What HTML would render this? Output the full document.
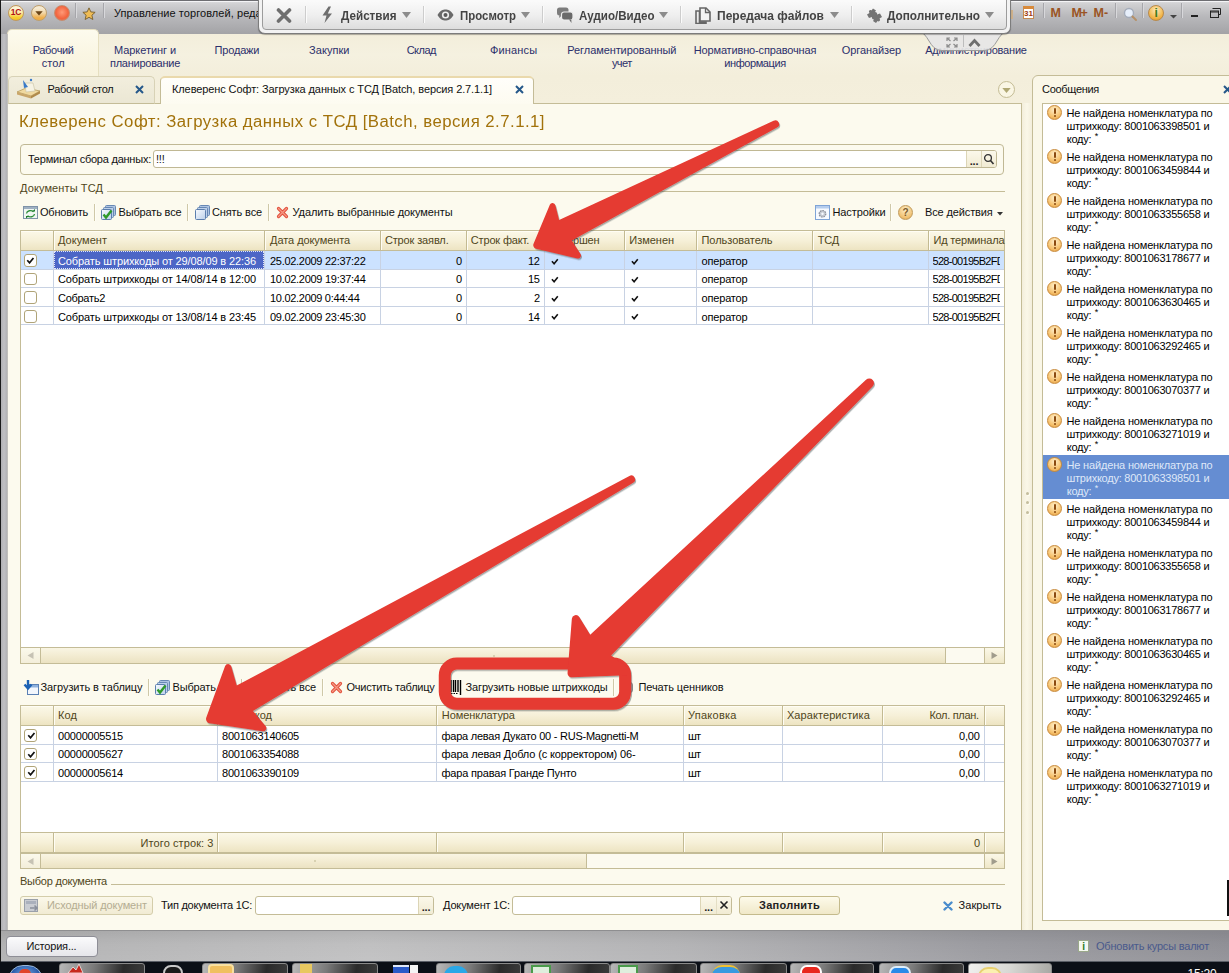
<!DOCTYPE html>
<html lang="ru"><head><meta charset="utf-8"><title>1C</title>
<style>
html,body{margin:0;padding:0;background:#000;}
#root{position:relative;width:1229px;height:973px;overflow:hidden;font-family:"Liberation Sans","DejaVu Sans",sans-serif;font-size:11px;background:#fcfaed;}
#root div,#root span.t,#root svg{position:absolute;box-sizing:border-box;}
span.t{white-space:pre;}
</style></head><body><div id="root">
<div style="left:0px;top:0px;width:1229px;height:34px;background:linear-gradient(#e2e2e3 0px,#d0d0d2 4px,#b9b9bc 16px,#a3a3a6 34px);"></div>
<div style="left:0px;top:0px;width:1229px;height:1px;background:#6e6e72;"></div>
<div style="left:0px;top:1px;width:1229px;height:1px;background:#f4f4f6;"></div>
<div style="left:8px;top:5px;width:16px;height:16px;border-radius:8px;background:linear-gradient(#fdf4d8 15%,#fbe9a0 50%,#f7cf30 80%,#f2c028);border:1px solid #c2995a;"></div>
<span class="t" style="left:10.75px;top:5.80px;font-size:8.5px;line-height:12px;color:#b01216;letter-spacing:-0.188px;font-weight:bold;">1С</span>
<div style="left:31px;top:5px;width:16px;height:16px;border-radius:8px;background:linear-gradient(#f5ead2 15%,#f1d6a6 50%,#f0ae48 85%);border:1px solid #bf9f6c;"></div>
<svg style="left:35px;top:11px" width="8" height="5"><path d="M.3 .3h7.400l-3.700 4.200z" fill="#6a4416"/></svg>
<div style="left:54px;top:5px;width:16px;height:16px;border-radius:8px;background:radial-gradient(circle at 50% 45%,#ff9a78,#f2643e 60%,#e07a5c 85%,#d8967c);border:1px solid #c88a6c;"></div>
<div style="left:75px;top:3px;width:1px;height:15px;background:#a6a6aa;"></div>
<div style="left:76px;top:3px;width:1px;height:15px;background:#d8d8db;"></div>
<svg style="left:82px;top:6.500px" width="14" height="14" viewBox="0 0 16 16"><path d="M8 1l2.100 4.600 4.900.5-3.700 3.300 1.100 4.900L8 11.800 3.600 14.300l1.100-4.900L1 6.100l4.900-.5z" fill="#efbc55" stroke="#7c6230" stroke-width="1.100"/></svg>
<div style="left:103px;top:3px;width:1px;height:15px;background:#a6a6aa;"></div>
<div style="left:104px;top:3px;width:1px;height:15px;background:#d8d8db;"></div>
<span class="t" style="left:114.00px;top:5.50px;font-size:11px;line-height:15px;color:#111;letter-spacing:0.060px;">Управление торговлей, редакция 11</span>
<div style="left:1011px;top:10px;width:2px;height:9px;background:#cdb08a;"></div>
<div style="left:1022.7px;top:5.5px;width:11.5px;height:13px;background:#fff;border:1px solid #c58a52;border-top:3px solid #d98a3a;"></div>
<span class="t" style="left:1024.00px;top:8.30px;font-size:8px;line-height:12px;color:#a03a10;letter-spacing:0.047px;font-weight:bold;">31</span>
<div style="left:1043px;top:3px;width:1px;height:15px;background:#a6a6aa;"></div>
<div style="left:1044px;top:3px;width:1px;height:15px;background:#d8d8db;"></div>
<span class="t" style="left:1050.50px;top:4.80px;font-size:12.5px;line-height:17px;color:#9a5424;letter-spacing:-0.422px;font-weight:bold;">M</span>
<span class="t" style="left:1071.50px;top:4.80px;font-size:12.5px;line-height:17px;color:#9a5424;letter-spacing:-1.359px;font-weight:bold;">M+</span>
<span class="t" style="left:1093.50px;top:4.80px;font-size:12.5px;line-height:17px;color:#9a5424;letter-spacing:0.211px;font-weight:bold;">M-</span>
<div style="left:1115px;top:3px;width:1px;height:15px;background:#a6a6aa;"></div>
<div style="left:1116px;top:3px;width:1px;height:15px;background:#d8d8db;"></div>
<svg style="left:1122.500px;top:6.500px" width="15" height="15" viewBox="0 0 15 15"><circle cx="6" cy="6" r="4.500" fill="#e6eefa" stroke="#a4acba" stroke-width="1.400"/><path d="M9.500 9.500l3.500 3.500" stroke="#b59068" stroke-width="2" stroke-linecap="round"/></svg>
<div style="left:1142px;top:3px;width:1px;height:15px;background:#a6a6aa;"></div>
<div style="left:1143px;top:3px;width:1px;height:15px;background:#d8d8db;"></div>
<div style="left:1148px;top:5px;width:16px;height:16px;border-radius:8px;background:radial-gradient(circle at 50% 30%,#fdeab8,#f0b040 70%,#cc8a2a);border:1px solid #b98a4a;"></div>
<span class="t" style="left:1154.45px;top:5.00px;font-size:12px;line-height:16px;color:#3a7a1a;letter-spacing:-0.240px;font-weight:bold;">i</span>
<svg style="left:1170px;top:15px" width="7" height="4"><path d="M0 0h7l-3.500 3.500z" fill="#444"/></svg>
<div style="left:1181px;top:3px;width:1px;height:15px;background:#a6a6aa;"></div>
<div style="left:1182px;top:3px;width:1px;height:15px;background:#d8d8db;"></div>
<div style="left:1191px;top:14.8px;width:7px;height:2px;background:#222;"></div>
<svg style="left:1210px;top:8px" width="11" height="10" viewBox="0 0 11 10"><path d="M2.500 .5h8v6h-2" fill="none" stroke="#222"/><rect x=".5" y="3" width="8" height="6.500" fill="none" stroke="#222"/><path d="M.5 4h8" stroke="#222"/></svg>
<div style="left:0px;top:34px;width:1229px;height:42px;background:linear-gradient(#f3eedb,#f5f1e0 50%,#f3eedb);"></div>
<div style="left:7px;top:28.5px;width:92px;height:48px;background:linear-gradient(#fdfbee,#faf6e3 50%,#f8f3de);border-radius:5px 5px 0 0;border:1px solid #e6dfc0;border-bottom:none;"></div>
<span class="t" style="left:32.70px;top:43.20px;font-size:11px;line-height:15px;color:#2b2f6b;letter-spacing:-0.328px;">Рабочий</span>
<span class="t" style="left:41.70px;top:56.20px;font-size:11px;line-height:15px;color:#2b2f6b;letter-spacing:0.070px;">стол</span>
<span class="t" style="left:113.90px;top:43.20px;font-size:11px;line-height:15px;color:#2b2f6b;letter-spacing:-0.044px;">Маркетинг и</span>
<span class="t" style="left:110.00px;top:56.20px;font-size:11px;line-height:15px;color:#2b2f6b;letter-spacing:-0.260px;">планирование</span>
<span class="t" style="left:214.55px;top:43.20px;font-size:11px;line-height:15px;color:#2b2f6b;letter-spacing:-0.179px;">Продажи</span>
<span class="t" style="left:309.05px;top:43.20px;font-size:11px;line-height:15px;color:#2b2f6b;letter-spacing:0.054px;">Закупки</span>
<span class="t" style="left:406.65px;top:43.20px;font-size:11px;line-height:15px;color:#2b2f6b;letter-spacing:-0.509px;">Склад</span>
<span class="t" style="left:489.95px;top:43.20px;font-size:11px;line-height:15px;color:#2b2f6b;letter-spacing:0.159px;">Финансы</span>
<span class="t" style="left:567.30px;top:43.20px;font-size:11px;line-height:15px;color:#2b2f6b;letter-spacing:-0.083px;">Регламентированный</span>
<span class="t" style="left:611.90px;top:56.20px;font-size:11px;line-height:15px;color:#2b2f6b;letter-spacing:-0.558px;">учет</span>
<span class="t" style="left:693.75px;top:43.20px;font-size:11px;line-height:15px;color:#2b2f6b;letter-spacing:-0.151px;">Нормативно-справочная</span>
<span class="t" style="left:724.25px;top:56.20px;font-size:11px;line-height:15px;color:#2b2f6b;letter-spacing:-0.409px;">информация</span>
<span class="t" style="left:841.75px;top:43.20px;font-size:11px;line-height:15px;color:#2b2f6b;letter-spacing:-0.076px;">Органайзер</span>
<span class="t" style="left:925.20px;top:43.20px;font-size:11px;line-height:15px;color:#2b2f6b;letter-spacing:-0.194px;">Администрирование</span>
<div style="left:0px;top:76px;width:1229px;height:27px;background:linear-gradient(#f3eedb,#f4efdc);"></div>
<div style="left:8px;top:102.6px;width:1014px;height:1px;background:#c4bc97;"></div>
<div style="left:8px;top:75.5px;width:146.5px;height:28.5px;background:linear-gradient(#f2eedd,#ebe7d4);border:1px solid #d8d2b6;border-radius:5px 5px 0 0;border-bottom:1px solid #c4bc97;"></div>
<svg style="left:16px;top:77px" width="26" height="22" viewBox="0 0 26 22"><path d="M1 15l9-4 14 3-9 5z" fill="#f0d9a0" stroke="#b89a5a" stroke-width=".8"/><path d="M1 15v2.5l14 4V19z" fill="#c9a66a"/><path d="M15 19v2.500l9-5V14z" fill="#b08a4a"/><path d="M9 6l8 0 2 8-9 1z" fill="#f6f3e4" stroke="#c8c0a0" stroke-width=".6"/><path d="M7 3l5 7-4 1z" fill="#3a7ac8"/><circle cx="15" cy="3" r="1.2" fill="#3a7ac8"/></svg>
<span class="t" style="left:47.50px;top:81.50px;font-size:11px;line-height:15px;color:#111;letter-spacing:-0.255px;">Рабочий стол</span>
<svg style="left:135.2px;top:85px" width="9" height="9" viewBox="0 0 9 9"><path d="M1 1l7 7M8 1l-7 7" stroke="#25588a" stroke-width="2"/></svg>
<div style="left:160px;top:75.5px;width:374px;height:29px;background:linear-gradient(#fffefa,#fdfbf0);border:1px solid #c4bc97;border-top:2px solid #ead9ac;border-radius:5px 5px 0 0;border-bottom:none;"></div>
<span class="t" style="left:172.00px;top:82.00px;font-size:11px;line-height:15px;color:#111;letter-spacing:-0.106px;">Клеверенс Софт: Загрузка данных с ТСД [Batch, версия 2.7.1.1]</span>
<svg style="left:514.6px;top:85px" width="9" height="9" viewBox="0 0 9 9"><path d="M1 1l7 7M8 1l-7 7" stroke="#25588a" stroke-width="2"/></svg>
<div style="left:998px;top:80.5px;width:17px;height:17px;border-radius:9px;border:1px solid #c4bc94;background:#faf6e4;"></div>
<svg style="left:1002px;top:87.500px" width="9" height="6"><path d="M.3 0h8.400l-4.200 5z" fill="#b0a874"/></svg>
<div style="left:8px;top:103.6px;width:1014px;height:826.4px;background:#fcfaee;border-right:1px solid #c4bc97;"></div>
<span class="t" style="left:19.00px;top:110.50px;font-size:16px;line-height:21px;color:#a2720b;letter-spacing:0.450px;transform:scaleX(1.0472);transform-origin:left center;">Клеверенс Софт: Загрузка данных с ТСД [Batch, версия 2.7.1.1]</span>
<div style="left:20px;top:144.4px;width:984px;height:30.5px;border:1px solid #c0b894;border-radius:4px;background:#fcfaee;"></div>
<span class="t" style="left:28.00px;top:152.00px;font-size:11px;line-height:15px;color:#111;letter-spacing:-0.231px;">Терминал сбора данных:</span>
<div style="left:153px;top:149.5px;width:844px;height:18.7px;background:#fff;border:1px solid #c0b894;border-radius:3px;"></div>
<span class="t" style="left:156.00px;top:152.00px;font-size:11px;line-height:15px;color:#111;letter-spacing:-0.220px;">!!!</span>
<div style="left:966px;top:150.5px;width:30px;height:16.7px;background:linear-gradient(#fbf8ea,#f1ebd3);border-left:1px solid #dcd5b6;border-radius:0 2px 2px 0;"></div>
<span class="t" style="left:969.74px;top:153.50px;font-size:11px;line-height:15px;color:#222;letter-spacing:-0.220px;font-weight:bold;">...</span>
<div style="left:981px;top:150.5px;width:1px;height:16.7px;background:#dcd5b6;"></div>
<svg style="left:983px;top:153px" width="12" height="13" viewBox="0 0 12 13"><circle cx="5" cy="5" r="3.400" fill="none" stroke="#333" stroke-width="1.300"/><path d="M7.500 7.500l3 3.500" stroke="#333" stroke-width="1.600"/></svg>
<span class="t" style="left:20.00px;top:181.00px;font-size:11px;line-height:15px;color:#4f4620;letter-spacing:0.105px;">Документы ТСД</span>
<div style="left:107px;top:191px;width:898px;height:1px;background:#c4bc97;"></div>
<svg style="left:23px;top:206px" width="15" height="13" viewBox="0 0 15 13"><rect x=".5" y=".5" width="14" height="12" fill="#f0f6f2" stroke="#7f93a8"/><rect x="1" y="1" width="13" height="2" fill="#9fb0c2"/><path d="M3.500 7.500a4 3.200 0 0 1 7-1.800M11.500 8a4 3.200 0 0 1-7 1.800" fill="none" stroke="#2f8f3c" stroke-width="1.300"/><path d="M9 5.500h3v-2.500zM6 10H3v2.500z" fill="#1f7a2c"/></svg>
<span class="t" style="left:40.00px;top:205.00px;font-size:11px;line-height:15px;color:#111;letter-spacing:-0.227px;">Обновить</span>
<div style="left:94px;top:204px;width:1px;height:17px;background:#cfc8a8;"></div>
<div style="left:95px;top:204px;width:1px;height:17px;background:#fffef6;"></div>
<svg style="left:101px;top:205px" width="15" height="15" viewBox="0 0 15 15"><defs><linearGradient id="sg1" x1="0" y1="0" x2="1" y2="1"><stop offset="0" stop-color="#f8fbff"/><stop offset="1" stop-color="#bcd0ea"/></linearGradient></defs><rect x="4.500" y=".5" width="10" height="10" rx="1" fill="#aec4e2" stroke="#6788b4"/><rect x="2.500" y="2.500" width="10" height="10" rx="1" fill="#bdd0ea" stroke="#6788b4"/><rect x=".5" y="4.500" width="10" height="10" rx="1" fill="url(#sg1)" stroke="#5c7fae"/><path d="M2.500 9.500l2.500 3 5.500-7" fill="none" stroke="#2f9a2a" stroke-width="2.400"/></svg>
<span class="t" style="left:118.50px;top:205.00px;font-size:11px;line-height:15px;color:#111;letter-spacing:-0.155px;">Выбрать все</span>
<div style="left:187px;top:204px;width:1px;height:17px;background:#cfc8a8;"></div>
<div style="left:188px;top:204px;width:1px;height:17px;background:#fffef6;"></div>
<svg style="left:195px;top:205px" width="15" height="15" viewBox="0 0 15 15"><defs><linearGradient id="sg2" x1="0" y1="0" x2="1" y2="1"><stop offset="0" stop-color="#f8fbff"/><stop offset="1" stop-color="#bcd0ea"/></linearGradient></defs><rect x="4.500" y=".5" width="10" height="10" rx="1" fill="#aec4e2" stroke="#6788b4"/><rect x="2.500" y="2.500" width="10" height="10" rx="1" fill="#bdd0ea" stroke="#6788b4"/><rect x=".5" y="4.500" width="10" height="10" rx="1" fill="url(#sg2)" stroke="#5c7fae"/></svg>
<span class="t" style="left:212.00px;top:205.00px;font-size:11px;line-height:15px;color:#111;letter-spacing:-0.127px;">Снять все</span>
<div style="left:268px;top:204px;width:1px;height:17px;background:#cfc8a8;"></div>
<div style="left:269px;top:204px;width:1px;height:17px;background:#fffef6;"></div>
<svg style="left:276px;top:206px" width="13" height="13" viewBox="0 0 13 13"><path d="M2.500 2.500l8 8M10.500 2.500l-8 8" stroke="#e2503c" stroke-width="3.200" stroke-linecap="round"/><path d="M2.500 2.500l8 8M10.500 2.500l-8 8" stroke="#f59a86" stroke-width="1.200" stroke-linecap="round"/></svg>
<span class="t" style="left:292.50px;top:205.00px;font-size:11px;line-height:15px;color:#111;letter-spacing:-0.079px;">Удалить выбранные документы</span>
<svg style="left:815px;top:205px" width="15" height="15" viewBox="0 0 15 15"><rect x=".5" y=".5" width="14" height="14" fill="#f7faff" stroke="#7fa4d6"/><rect x="1" y="1" width="13" height="2.500" fill="#b5cdee"/><circle cx="7.500" cy="8.800" r="3.300" fill="#c4c8d0" stroke="#8a8e98" stroke-width="1.200" stroke-dasharray="1.600 .9"/><circle cx="7.500" cy="8.800" r="1.200" fill="#f7faff"/></svg>
<span class="t" style="left:832.50px;top:205.00px;font-size:11px;line-height:15px;color:#111;letter-spacing:-0.104px;">Настройки</span>
<div style="left:890px;top:204px;width:1px;height:17px;background:#cfc8a8;"></div>
<div style="left:891px;top:204px;width:1px;height:17px;background:#fffef6;"></div>
<div style="left:898px;top:205px;width:15px;height:15px;border-radius:8px;background:radial-gradient(circle at 50% 30%,#fdeec8,#f0c070 70%,#d09a4a);border:1px solid #c09a5a;"></div>
<span class="t" style="left:902.55px;top:206.00px;font-size:10px;line-height:14px;color:#7a5a2a;letter-spacing:-0.200px;font-weight:bold;">?</span>
<span class="t" style="left:925.00px;top:205.00px;font-size:11px;line-height:15px;color:#111;letter-spacing:-0.124px;">Все действия</span>
<svg style="left:996.500px;top:211.500px" width="6" height="4"><path d="M0 0h6l-3 3.500z" fill="#333"/></svg>
<div style="left:20px;top:230px;width:984.5px;height:434px;background:#fff;border:1px solid #c4bc97;"></div>
<div style="left:21px;top:231px;width:983px;height:20px;background:linear-gradient(#fbf8e8,#f6f0d8 50%,#ede4c2);border-bottom:1px solid #c4bc97;box-shadow:inset 0 1px 0 #fffdf4;"></div>
<div style="left:53px;top:231px;width:1px;height:19px;background:#c3ba92;"></div>
<div style="left:54px;top:232px;width:1px;height:18px;background:#fffdf4;"></div>
<span class="t" style="left:58.00px;top:233.40px;font-size:11px;line-height:15px;color:#4f4620;letter-spacing:0.025px;">Документ</span>
<div style="left:264px;top:231px;width:1px;height:19px;background:#c3ba92;"></div>
<div style="left:265px;top:232px;width:1px;height:18px;background:#fffdf4;"></div>
<span class="t" style="left:270.10px;top:233.40px;font-size:11px;line-height:15px;color:#4f4620;letter-spacing:-0.076px;">Дата документа</span>
<div style="left:380px;top:231px;width:1px;height:19px;background:#c3ba92;"></div>
<div style="left:381px;top:232px;width:1px;height:18px;background:#fffdf4;"></div>
<span class="t" style="left:384.90px;top:233.40px;font-size:11px;line-height:15px;color:#4f4620;letter-spacing:-0.132px;">Строк заявл.</span>
<div style="left:466px;top:231px;width:1px;height:19px;background:#c3ba92;"></div>
<div style="left:467px;top:232px;width:1px;height:18px;background:#fffdf4;"></div>
<span class="t" style="left:470.80px;top:233.40px;font-size:11px;line-height:15px;color:#4f4620;letter-spacing:-0.162px;">Строк факт.</span>
<div style="left:544px;top:231px;width:1px;height:19px;background:#c3ba92;"></div>
<div style="left:545px;top:232px;width:1px;height:18px;background:#fffdf4;"></div>
<span class="t" style="left:549.00px;top:233.40px;font-size:11px;line-height:15px;color:#4f4620;letter-spacing:-0.154px;">Завершен</span>
<div style="left:624px;top:231px;width:1px;height:19px;background:#c3ba92;"></div>
<div style="left:625px;top:232px;width:1px;height:18px;background:#fffdf4;"></div>
<span class="t" style="left:629.30px;top:233.40px;font-size:11px;line-height:15px;color:#4f4620;letter-spacing:-0.015px;">Изменен</span>
<div style="left:696px;top:231px;width:1px;height:19px;background:#c3ba92;"></div>
<div style="left:697px;top:232px;width:1px;height:18px;background:#fffdf4;"></div>
<span class="t" style="left:701.50px;top:233.40px;font-size:11px;line-height:15px;color:#4f4620;letter-spacing:-0.033px;">Пользователь</span>
<div style="left:812px;top:231px;width:1px;height:19px;background:#c3ba92;"></div>
<div style="left:813px;top:232px;width:1px;height:18px;background:#fffdf4;"></div>
<span class="t" style="left:817.80px;top:233.40px;font-size:11px;line-height:15px;color:#4f4620;letter-spacing:-0.192px;">ТСД</span>
<div style="left:928px;top:231px;width:1px;height:19px;background:#c3ba92;"></div>
<div style="left:929px;top:232px;width:1px;height:18px;background:#fffdf4;"></div>
<span class="t" style="left:933.40px;top:233.40px;font-size:11px;line-height:15px;color:#4f4620;letter-spacing:-0.164px;">Ид терминала</span>
<div style="left:21px;top:251px;width:983px;height:18px;background:#cce2ff;"></div>
<div style="left:54px;top:251px;width:210px;height:18px;background:#4c66c6;border:1px dotted #dfe6fa;"></div>
<div style="left:21px;top:269px;width:983px;height:1px;background:#c8d2e3;"></div>
<div style="left:53px;top:251px;width:1px;height:19px;background:#c8d2e3;"></div>
<div style="left:264px;top:251px;width:1px;height:19px;background:#c8d2e3;"></div>
<div style="left:380px;top:251px;width:1px;height:19px;background:#c8d2e3;"></div>
<div style="left:466px;top:251px;width:1px;height:19px;background:#c8d2e3;"></div>
<div style="left:544px;top:251px;width:1px;height:19px;background:#c8d2e3;"></div>
<div style="left:624px;top:251px;width:1px;height:19px;background:#c8d2e3;"></div>
<div style="left:696px;top:251px;width:1px;height:19px;background:#c8d2e3;"></div>
<div style="left:812px;top:251px;width:1px;height:19px;background:#c8d2e3;"></div>
<div style="left:928px;top:251px;width:1px;height:19px;background:#c8d2e3;"></div>
<div style="left:24px;top:254.2px;width:12.5px;height:12.5px;background:#fff;border:1px solid #b0a478;border-radius:3px;"></div>
<svg style="left:26.2px;top:257.0px" width="9" height="7" viewBox="0 0 8.500 7"><path d="M1 3.200l2.300 2.600L7.200 1" fill="none" stroke="#111" stroke-width="1.700"/></svg>
<span class="t" style="left:58.00px;top:253.70px;font-size:11px;line-height:15px;color:#fff;letter-spacing:-0.116px;">Собрать штрихкоды от 29/08/09 в 22:36</span>
<span class="t" style="left:270.00px;top:253.70px;font-size:11px;line-height:15px;color:#000;letter-spacing:-0.286px;">25.02.2009 22:37:22</span>
<span class="t" style="left:455.88px;top:253.70px;font-size:11px;line-height:15px;color:#000;letter-spacing:-0.220px;">0</span>
<span class="t" style="left:527.97px;top:253.70px;font-size:11px;line-height:15px;color:#000;letter-spacing:-0.220px;">12</span>
<svg style="left:551px;top:257.5px" width="8" height="7" viewBox="0 0 8.500 7"><path d="M1 3.200l2.300 2.600L7.200 1" fill="none" stroke="#111" stroke-width="1.700"/></svg>
<svg style="left:631px;top:257.5px" width="8" height="7" viewBox="0 0 8.500 7"><path d="M1 3.200l2.300 2.600L7.200 1" fill="none" stroke="#111" stroke-width="1.700"/></svg>
<span class="t" style="left:701.50px;top:253.70px;font-size:11px;line-height:15px;color:#000;letter-spacing:-0.168px;">оператор</span>
<span class="t" style="left:932.50px;top:253.70px;font-size:11px;line-height:15px;color:#000;letter-spacing:-0.710px;width:67.300px;overflow:hidden;">528-00195B2FD</span>
<div style="left:21px;top:287px;width:983px;height:1px;background:#c8d2e3;"></div>
<div style="left:53px;top:270px;width:1px;height:18px;background:#c8d2e3;"></div>
<div style="left:264px;top:270px;width:1px;height:18px;background:#c8d2e3;"></div>
<div style="left:380px;top:270px;width:1px;height:18px;background:#c8d2e3;"></div>
<div style="left:466px;top:270px;width:1px;height:18px;background:#c8d2e3;"></div>
<div style="left:544px;top:270px;width:1px;height:18px;background:#c8d2e3;"></div>
<div style="left:624px;top:270px;width:1px;height:18px;background:#c8d2e3;"></div>
<div style="left:696px;top:270px;width:1px;height:18px;background:#c8d2e3;"></div>
<div style="left:812px;top:270px;width:1px;height:18px;background:#c8d2e3;"></div>
<div style="left:928px;top:270px;width:1px;height:18px;background:#c8d2e3;"></div>
<div style="left:24px;top:272.8px;width:12.5px;height:12.5px;background:#fff;border:1px solid #b0a478;border-radius:3px;"></div>
<span class="t" style="left:58.00px;top:272.30px;font-size:11px;line-height:15px;color:#000;letter-spacing:-0.116px;">Собрать штрихкоды от 14/08/14 в 12:00</span>
<span class="t" style="left:270.00px;top:272.30px;font-size:11px;line-height:15px;color:#000;letter-spacing:-0.286px;">10.02.2009 19:37:44</span>
<span class="t" style="left:455.88px;top:272.30px;font-size:11px;line-height:15px;color:#000;letter-spacing:-0.220px;">0</span>
<span class="t" style="left:527.97px;top:272.30px;font-size:11px;line-height:15px;color:#000;letter-spacing:-0.220px;">15</span>
<svg style="left:551px;top:276.1px" width="8" height="7" viewBox="0 0 8.500 7"><path d="M1 3.200l2.300 2.600L7.200 1" fill="none" stroke="#111" stroke-width="1.700"/></svg>
<svg style="left:631px;top:276.1px" width="8" height="7" viewBox="0 0 8.500 7"><path d="M1 3.200l2.300 2.600L7.200 1" fill="none" stroke="#111" stroke-width="1.700"/></svg>
<span class="t" style="left:701.50px;top:272.30px;font-size:11px;line-height:15px;color:#000;letter-spacing:-0.168px;">оператор</span>
<span class="t" style="left:932.50px;top:272.30px;font-size:11px;line-height:15px;color:#000;letter-spacing:-0.710px;width:67.300px;overflow:hidden;">528-00195B2FD</span>
<div style="left:21px;top:306px;width:983px;height:1px;background:#c8d2e3;"></div>
<div style="left:53px;top:288px;width:1px;height:19px;background:#c8d2e3;"></div>
<div style="left:264px;top:288px;width:1px;height:19px;background:#c8d2e3;"></div>
<div style="left:380px;top:288px;width:1px;height:19px;background:#c8d2e3;"></div>
<div style="left:466px;top:288px;width:1px;height:19px;background:#c8d2e3;"></div>
<div style="left:544px;top:288px;width:1px;height:19px;background:#c8d2e3;"></div>
<div style="left:624px;top:288px;width:1px;height:19px;background:#c8d2e3;"></div>
<div style="left:696px;top:288px;width:1px;height:19px;background:#c8d2e3;"></div>
<div style="left:812px;top:288px;width:1px;height:19px;background:#c8d2e3;"></div>
<div style="left:928px;top:288px;width:1px;height:19px;background:#c8d2e3;"></div>
<div style="left:24px;top:291.4px;width:12.5px;height:12.5px;background:#fff;border:1px solid #b0a478;border-radius:3px;"></div>
<span class="t" style="left:58.00px;top:290.90px;font-size:11px;line-height:15px;color:#000;letter-spacing:-0.281px;">Собрать2</span>
<span class="t" style="left:270.00px;top:290.90px;font-size:11px;line-height:15px;color:#000;letter-spacing:-0.295px;">10.02.2009 0:44:44</span>
<span class="t" style="left:455.88px;top:290.90px;font-size:11px;line-height:15px;color:#000;letter-spacing:-0.220px;">0</span>
<span class="t" style="left:533.88px;top:290.90px;font-size:11px;line-height:15px;color:#000;letter-spacing:-0.220px;">2</span>
<svg style="left:551px;top:294.7px" width="8" height="7" viewBox="0 0 8.500 7"><path d="M1 3.200l2.300 2.600L7.200 1" fill="none" stroke="#111" stroke-width="1.700"/></svg>
<svg style="left:631px;top:294.7px" width="8" height="7" viewBox="0 0 8.500 7"><path d="M1 3.200l2.300 2.600L7.200 1" fill="none" stroke="#111" stroke-width="1.700"/></svg>
<span class="t" style="left:701.50px;top:290.90px;font-size:11px;line-height:15px;color:#000;letter-spacing:-0.168px;">оператор</span>
<span class="t" style="left:932.50px;top:290.90px;font-size:11px;line-height:15px;color:#000;letter-spacing:-0.710px;width:67.300px;overflow:hidden;">528-00195B2FD</span>
<div style="left:21px;top:324px;width:983px;height:1px;background:#c8d2e3;"></div>
<div style="left:53px;top:307px;width:1px;height:18px;background:#c8d2e3;"></div>
<div style="left:264px;top:307px;width:1px;height:18px;background:#c8d2e3;"></div>
<div style="left:380px;top:307px;width:1px;height:18px;background:#c8d2e3;"></div>
<div style="left:466px;top:307px;width:1px;height:18px;background:#c8d2e3;"></div>
<div style="left:544px;top:307px;width:1px;height:18px;background:#c8d2e3;"></div>
<div style="left:624px;top:307px;width:1px;height:18px;background:#c8d2e3;"></div>
<div style="left:696px;top:307px;width:1px;height:18px;background:#c8d2e3;"></div>
<div style="left:812px;top:307px;width:1px;height:18px;background:#c8d2e3;"></div>
<div style="left:928px;top:307px;width:1px;height:18px;background:#c8d2e3;"></div>
<div style="left:24px;top:310.0px;width:12.5px;height:12.5px;background:#fff;border:1px solid #b0a478;border-radius:3px;"></div>
<span class="t" style="left:58.00px;top:309.50px;font-size:11px;line-height:15px;color:#000;letter-spacing:-0.116px;">Собрать штрихкоды от 13/08/14 в 23:45</span>
<span class="t" style="left:270.00px;top:309.50px;font-size:11px;line-height:15px;color:#000;letter-spacing:-0.286px;">09.02.2009 23:45:30</span>
<span class="t" style="left:455.88px;top:309.50px;font-size:11px;line-height:15px;color:#000;letter-spacing:-0.220px;">0</span>
<span class="t" style="left:527.97px;top:309.50px;font-size:11px;line-height:15px;color:#000;letter-spacing:-0.220px;">14</span>
<svg style="left:551px;top:313.3px" width="8" height="7" viewBox="0 0 8.500 7"><path d="M1 3.200l2.300 2.600L7.200 1" fill="none" stroke="#111" stroke-width="1.700"/></svg>
<svg style="left:631px;top:313.3px" width="8" height="7" viewBox="0 0 8.500 7"><path d="M1 3.200l2.300 2.600L7.200 1" fill="none" stroke="#111" stroke-width="1.700"/></svg>
<span class="t" style="left:701.50px;top:309.50px;font-size:11px;line-height:15px;color:#000;letter-spacing:-0.168px;">оператор</span>
<span class="t" style="left:932.50px;top:309.50px;font-size:11px;line-height:15px;color:#000;letter-spacing:-0.710px;width:67.300px;overflow:hidden;">528-00195B2FD</span>
<div style="left:21px;top:647px;width:983px;height:16px;background:#fcfaf0;border-top:1px solid #c4bc97;"></div>
<div style="left:21px;top:648px;width:20px;height:15px;background:linear-gradient(#fbf9ec,#f3eeda);border-right:1px solid #c4bc97;"></div>
<svg style="left:27px;top:651px" width="7" height="9"><path d="M6.500 1v7L.5 4.500z" fill="#c6c2b4"/></svg>
<div style="left:984px;top:648px;width:20px;height:15px;background:linear-gradient(#fbf8e8,#efe7c8);border-left:1px solid #c4bc97;"></div>
<svg style="left:991px;top:651px" width="7" height="9"><path d="M.5 1v7l6-3.500z" fill="#a09c8c"/></svg>
<div style="left:41px;top:648px;width:905px;height:15px;background:linear-gradient(#f9f5e3,#f3ecd2 50%,#ebe2c2);border-right:1px solid #c4bc97;"></div>
<div style="left:493px;top:655px;width:2px;height:2px;background:#cfc8a6;border-radius:1px;"></div>
<svg style="left:23px;top:679px" width="16" height="16" viewBox="0 0 16 16"><rect x="4.500" y="5.500" width="11" height="10" fill="#f2f6fc" stroke="#5a80b4"/><rect x="5" y="6" width="10" height="2.500" fill="#8fb2de"/><path d="M5 1v7.500M1.500 5.500L5 9.500 8.500 5.500" fill="none" stroke="#1d62b4" stroke-width="2.400"/></svg>
<span class="t" style="left:40.50px;top:680.00px;font-size:11px;line-height:15px;color:#111;letter-spacing:-0.073px;">Загрузить в таблицу</span>
<div style="left:148px;top:679px;width:1px;height:17px;background:#cfc8a8;"></div>
<div style="left:149px;top:679px;width:1px;height:17px;background:#fffef6;"></div>
<svg style="left:155px;top:680px" width="15" height="15" viewBox="0 0 15 15"><defs><linearGradient id="sg3" x1="0" y1="0" x2="1" y2="1"><stop offset="0" stop-color="#f8fbff"/><stop offset="1" stop-color="#bcd0ea"/></linearGradient></defs><rect x="4.500" y=".5" width="10" height="10" rx="1" fill="#aec4e2" stroke="#6788b4"/><rect x="2.500" y="2.500" width="10" height="10" rx="1" fill="#bdd0ea" stroke="#6788b4"/><rect x=".5" y="4.500" width="10" height="10" rx="1" fill="url(#sg3)" stroke="#5c7fae"/><path d="M2.500 9.500l2.500 3 5.500-7" fill="none" stroke="#2f9a2a" stroke-width="2.400"/></svg>
<span class="t" style="left:172.50px;top:680.00px;font-size:11px;line-height:15px;color:#111;letter-spacing:-0.155px;">Выбрать все</span>
<div style="left:241px;top:679px;width:1px;height:17px;background:#cfc8a8;"></div>
<div style="left:242px;top:679px;width:1px;height:17px;background:#fffef6;"></div>
<svg style="left:249px;top:680px" width="15" height="15" viewBox="0 0 15 15"><defs><linearGradient id="sg4" x1="0" y1="0" x2="1" y2="1"><stop offset="0" stop-color="#f8fbff"/><stop offset="1" stop-color="#bcd0ea"/></linearGradient></defs><rect x="4.500" y=".5" width="10" height="10" rx="1" fill="#aec4e2" stroke="#6788b4"/><rect x="2.500" y="2.500" width="10" height="10" rx="1" fill="#bdd0ea" stroke="#6788b4"/><rect x=".5" y="4.500" width="10" height="10" rx="1" fill="url(#sg4)" stroke="#5c7fae"/></svg>
<span class="t" style="left:266.00px;top:680.00px;font-size:11px;line-height:15px;color:#111;letter-spacing:-0.127px;">Снять все</span>
<div style="left:322px;top:679px;width:1px;height:17px;background:#cfc8a8;"></div>
<div style="left:323px;top:679px;width:1px;height:17px;background:#fffef6;"></div>
<svg style="left:330px;top:681px" width="13" height="13" viewBox="0 0 13 13"><path d="M2.500 2.500l8 8M10.500 2.500l-8 8" stroke="#e2503c" stroke-width="3.200" stroke-linecap="round"/><path d="M2.500 2.500l8 8M10.500 2.500l-8 8" stroke="#f59a86" stroke-width="1.200" stroke-linecap="round"/></svg>
<span class="t" style="left:346.50px;top:680.00px;font-size:11px;line-height:15px;color:#111;letter-spacing:-0.260px;">Очистить таблицу</span>
<div style="left:440px;top:679px;width:1px;height:17px;background:#cfc8a8;"></div>
<div style="left:441px;top:679px;width:1px;height:17px;background:#fffef6;"></div>
<svg style="left:450px;top:680px" width="12" height="15" viewBox="0 0 12 15"><path d="M1 0v12M3.500 0v12M5.500 0v12M8 0v12M10.500 0v15" stroke="#000" stroke-width="1.400"/><path d="M1 13.500h7" stroke="#000" stroke-width="1" stroke-dasharray="1.500 1"/></svg>
<span class="t" style="left:465.50px;top:680.00px;font-size:11px;line-height:15px;color:#111;letter-spacing:-0.127px;">Загрузить новые штрихкоды</span>
<div style="left:613px;top:679px;width:1px;height:17px;background:#cfc8a8;"></div>
<div style="left:614px;top:679px;width:1px;height:17px;background:#fffef6;"></div>
<div style="left:622px;top:682px;width:11px;height:11px;background:#b8b8b8;border-radius:3px;border:1px solid #8a8a8a;"></div>
<span class="t" style="left:638.50px;top:680.00px;font-size:11px;line-height:15px;color:#111;letter-spacing:-0.105px;">Печать ценников</span>
<div style="left:20px;top:705px;width:984.5px;height:164px;background:#fff;border:1px solid #c4bc97;"></div>
<div style="left:21px;top:706px;width:983px;height:20px;background:linear-gradient(#fbf8e8,#f6f0d8 50%,#ede4c2);border-bottom:1px solid #c4bc97;box-shadow:inset 0 1px 0 #fffdf4;"></div>
<div style="left:53px;top:706px;width:1px;height:19px;background:#c3ba92;"></div>
<div style="left:54px;top:707px;width:1px;height:18px;background:#fffdf4;"></div>
<div style="left:217px;top:706px;width:1px;height:19px;background:#c3ba92;"></div>
<div style="left:218px;top:707px;width:1px;height:18px;background:#fffdf4;"></div>
<div style="left:436px;top:706px;width:1px;height:19px;background:#c3ba92;"></div>
<div style="left:437px;top:707px;width:1px;height:18px;background:#fffdf4;"></div>
<div style="left:683px;top:706px;width:1px;height:19px;background:#c3ba92;"></div>
<div style="left:684px;top:707px;width:1px;height:18px;background:#fffdf4;"></div>
<div style="left:782px;top:706px;width:1px;height:19px;background:#c3ba92;"></div>
<div style="left:783px;top:707px;width:1px;height:18px;background:#fffdf4;"></div>
<div style="left:882px;top:706px;width:1px;height:19px;background:#c3ba92;"></div>
<div style="left:883px;top:707px;width:1px;height:18px;background:#fffdf4;"></div>
<div style="left:984px;top:706px;width:1px;height:19px;background:#c3ba92;"></div>
<div style="left:985px;top:707px;width:1px;height:18px;background:#fffdf4;"></div>
<span class="t" style="left:58.00px;top:708.40px;font-size:11px;line-height:15px;color:#4f4620;letter-spacing:0.099px;">Код</span>
<span class="t" style="left:222.00px;top:708.40px;font-size:11px;line-height:15px;color:#4f4620;letter-spacing:-0.016px;">Штрихкод</span>
<span class="t" style="left:441.80px;top:708.40px;font-size:11px;line-height:15px;color:#4f4620;letter-spacing:-0.069px;">Номенклатура</span>
<span class="t" style="left:688.10px;top:708.40px;font-size:11px;line-height:15px;color:#4f4620;letter-spacing:0.232px;">Упаковка</span>
<span class="t" style="left:786.90px;top:708.40px;font-size:11px;line-height:15px;color:#4f4620;letter-spacing:0.087px;">Характеристика</span>
<span class="t" style="left:929.47px;top:708.40px;font-size:11px;line-height:15px;color:#4f4620;letter-spacing:-0.325px;">Кол. план.</span>
<div style="left:21px;top:744px;width:983px;height:1px;background:#c8d2e3;"></div>
<div style="left:53px;top:726px;width:1px;height:19px;background:#c8d2e3;"></div>
<div style="left:217px;top:726px;width:1px;height:19px;background:#c8d2e3;"></div>
<div style="left:436px;top:726px;width:1px;height:19px;background:#c8d2e3;"></div>
<div style="left:683px;top:726px;width:1px;height:19px;background:#c8d2e3;"></div>
<div style="left:782px;top:726px;width:1px;height:19px;background:#c8d2e3;"></div>
<div style="left:882px;top:726px;width:1px;height:19px;background:#c8d2e3;"></div>
<div style="left:984px;top:726px;width:1px;height:19px;background:#c8d2e3;"></div>
<div style="left:24.3px;top:729.2px;width:12.5px;height:12.5px;background:#fff;border:1px solid #b0a478;border-radius:3px;"></div>
<svg style="left:26.5px;top:732.0px" width="9" height="7" viewBox="0 0 8.500 7"><path d="M1 3.200l2.300 2.600L7.200 1" fill="none" stroke="#111" stroke-width="1.700"/></svg>
<span class="t" style="left:58.00px;top:728.70px;font-size:11px;line-height:15px;color:#000;letter-spacing:-0.209px;">00000005515</span>
<span class="t" style="left:222.00px;top:728.70px;font-size:11px;line-height:15px;color:#000;letter-spacing:-0.195px;">8001063140605</span>
<span class="t" style="left:441.50px;top:728.70px;font-size:11px;line-height:15px;color:#000;letter-spacing:-0.243px;">фара левая Дукато 00 - RUS-Magnetti-M</span>
<span class="t" style="left:688.00px;top:728.70px;font-size:11px;line-height:15px;color:#000;letter-spacing:-0.938px;">шт</span>
<span class="t" style="left:958.89px;top:728.70px;font-size:11px;line-height:15px;color:#000;letter-spacing:-0.105px;">0,00</span>
<div style="left:21px;top:762px;width:983px;height:1px;background:#c8d2e3;"></div>
<div style="left:53px;top:745px;width:1px;height:18px;background:#c8d2e3;"></div>
<div style="left:217px;top:745px;width:1px;height:18px;background:#c8d2e3;"></div>
<div style="left:436px;top:745px;width:1px;height:18px;background:#c8d2e3;"></div>
<div style="left:683px;top:745px;width:1px;height:18px;background:#c8d2e3;"></div>
<div style="left:782px;top:745px;width:1px;height:18px;background:#c8d2e3;"></div>
<div style="left:882px;top:745px;width:1px;height:18px;background:#c8d2e3;"></div>
<div style="left:984px;top:745px;width:1px;height:18px;background:#c8d2e3;"></div>
<div style="left:24.3px;top:747.8000000000001px;width:12.5px;height:12.5px;background:#fff;border:1px solid #b0a478;border-radius:3px;"></div>
<svg style="left:26.5px;top:750.6px" width="9" height="7" viewBox="0 0 8.500 7"><path d="M1 3.200l2.300 2.600L7.200 1" fill="none" stroke="#111" stroke-width="1.700"/></svg>
<span class="t" style="left:58.00px;top:747.30px;font-size:11px;line-height:15px;color:#000;letter-spacing:-0.209px;">00000005627</span>
<span class="t" style="left:222.00px;top:747.30px;font-size:11px;line-height:15px;color:#000;letter-spacing:-0.195px;">8001063354088</span>
<span class="t" style="left:441.50px;top:747.30px;font-size:11px;line-height:15px;color:#000;letter-spacing:-0.141px;">фара левая Добло (с корректором) 06-</span>
<span class="t" style="left:688.00px;top:747.30px;font-size:11px;line-height:15px;color:#000;letter-spacing:-0.938px;">шт</span>
<span class="t" style="left:958.89px;top:747.30px;font-size:11px;line-height:15px;color:#000;letter-spacing:-0.105px;">0,00</span>
<div style="left:21px;top:781px;width:983px;height:1px;background:#c8d2e3;"></div>
<div style="left:53px;top:763px;width:1px;height:19px;background:#c8d2e3;"></div>
<div style="left:217px;top:763px;width:1px;height:19px;background:#c8d2e3;"></div>
<div style="left:436px;top:763px;width:1px;height:19px;background:#c8d2e3;"></div>
<div style="left:683px;top:763px;width:1px;height:19px;background:#c8d2e3;"></div>
<div style="left:782px;top:763px;width:1px;height:19px;background:#c8d2e3;"></div>
<div style="left:882px;top:763px;width:1px;height:19px;background:#c8d2e3;"></div>
<div style="left:984px;top:763px;width:1px;height:19px;background:#c8d2e3;"></div>
<div style="left:24.3px;top:766.4000000000001px;width:12.5px;height:12.5px;background:#fff;border:1px solid #b0a478;border-radius:3px;"></div>
<svg style="left:26.5px;top:769.2px" width="9" height="7" viewBox="0 0 8.500 7"><path d="M1 3.200l2.300 2.600L7.200 1" fill="none" stroke="#111" stroke-width="1.700"/></svg>
<span class="t" style="left:58.00px;top:765.90px;font-size:11px;line-height:15px;color:#000;letter-spacing:-0.209px;">00000005614</span>
<span class="t" style="left:222.00px;top:765.90px;font-size:11px;line-height:15px;color:#000;letter-spacing:-0.195px;">8001063390109</span>
<span class="t" style="left:441.50px;top:765.90px;font-size:11px;line-height:15px;color:#000;letter-spacing:-0.178px;">фара правая Гранде Пунто</span>
<span class="t" style="left:688.00px;top:765.90px;font-size:11px;line-height:15px;color:#000;letter-spacing:-0.938px;">шт</span>
<span class="t" style="left:958.89px;top:765.90px;font-size:11px;line-height:15px;color:#000;letter-spacing:-0.105px;">0,00</span>
<div style="left:21px;top:832px;width:983px;height:21px;background:linear-gradient(#fbf8e8,#f6f0d8 50%,#ede4c2);border-top:1px solid #c4bc97;border-bottom:1px solid #c4bc97;"></div>
<div style="left:53px;top:833px;width:1px;height:19px;background:#c3ba92;"></div>
<div style="left:54px;top:833px;width:1px;height:19px;background:#fffdf4;"></div>
<div style="left:217px;top:833px;width:1px;height:19px;background:#c3ba92;"></div>
<div style="left:218px;top:833px;width:1px;height:19px;background:#fffdf4;"></div>
<div style="left:436px;top:833px;width:1px;height:19px;background:#c3ba92;"></div>
<div style="left:437px;top:833px;width:1px;height:19px;background:#fffdf4;"></div>
<div style="left:683px;top:833px;width:1px;height:19px;background:#c3ba92;"></div>
<div style="left:684px;top:833px;width:1px;height:19px;background:#fffdf4;"></div>
<div style="left:782px;top:833px;width:1px;height:19px;background:#c3ba92;"></div>
<div style="left:783px;top:833px;width:1px;height:19px;background:#fffdf4;"></div>
<div style="left:882px;top:833px;width:1px;height:19px;background:#c3ba92;"></div>
<div style="left:883px;top:833px;width:1px;height:19px;background:#fffdf4;"></div>
<div style="left:984px;top:833px;width:1px;height:19px;background:#c3ba92;"></div>
<div style="left:985px;top:833px;width:1px;height:19px;background:#fffdf4;"></div>
<span class="t" style="left:140.59px;top:835.50px;font-size:11px;line-height:15px;color:#4f4620;letter-spacing:0.093px;">Итого строк: 3</span>
<span class="t" style="left:973.88px;top:835.50px;font-size:11px;line-height:15px;color:#4f4620;letter-spacing:-0.220px;">0</span>
<div style="left:21px;top:853px;width:983px;height:15px;background:#fcfaf0;border-top:1px solid #c4bc97;"></div>
<div style="left:21px;top:854px;width:20px;height:14px;background:linear-gradient(#fbf9ec,#f3eeda);border-right:1px solid #c4bc97;"></div>
<svg style="left:27px;top:857px" width="7" height="9"><path d="M6.500 1v7L.5 4.500z" fill="#c6c2b4"/></svg>
<div style="left:984px;top:854px;width:20px;height:14px;background:linear-gradient(#fbf8e8,#efe7c8);border-left:1px solid #c4bc97;"></div>
<svg style="left:991px;top:857px" width="7" height="9"><path d="M.5 1v7l6-3.500z" fill="#a09c8c"/></svg>
<div style="left:41px;top:854px;width:546px;height:14px;background:linear-gradient(#f9f5e3,#f3ecd2 50%,#ebe2c2);border-right:1px solid #c4bc97;"></div>
<div style="left:314px;top:860px;width:2px;height:2px;background:#cfc8a6;border-radius:1px;"></div>
<span class="t" style="left:20.00px;top:874.00px;font-size:11px;line-height:15px;color:#4f4620;letter-spacing:-0.232px;">Выбор документа</span>
<div style="left:111px;top:884px;width:894px;height:1px;background:#c4bc97;"></div>
<div style="left:20px;top:896px;width:133px;height:19px;background:linear-gradient(#fbf8ea,#f1ebd3);border:1px solid #d4cdaa;border-radius:3px;"></div>
<svg style="left:24px;top:899px" width="15" height="14" viewBox="0 0 15 14"><rect x=".5" y=".5" width="13" height="12" fill="#c9ccd2" stroke="#9aa0aa"/><rect x="2" y="2" width="10" height="3" fill="#aab0bc"/><path d="M6 9h7M10.500 6.500L13 9l-2.500 2.500" fill="none" stroke="#8a909c" stroke-width="1.500"/></svg>
<span class="t" style="left:47.00px;top:898.00px;font-size:11px;line-height:15px;color:#b4ad92;letter-spacing:-0.112px;">Исходный документ</span>
<span class="t" style="left:161.00px;top:898.00px;font-size:11px;line-height:15px;color:#111;letter-spacing:-0.247px;">Тип документа 1С:</span>
<div style="left:255px;top:896px;width:179px;height:19px;background:#fff;border:1px solid #c4bc97;border-radius:3px;"></div>
<div style="left:418px;top:897px;width:15px;height:17px;background:linear-gradient(#fbf8ea,#f1ebd3);border-left:1px solid #dcd5b6;border-radius:0 2px 2px 0;"></div>
<span class="t" style="left:421.74px;top:899.50px;font-size:11px;line-height:15px;color:#222;letter-spacing:-0.220px;font-weight:bold;">...</span>
<span class="t" style="left:443.00px;top:898.00px;font-size:11px;line-height:15px;color:#111;letter-spacing:-0.165px;">Документ 1С:</span>
<div style="left:512px;top:896px;width:220px;height:19px;background:#fff;border:1px solid #c4bc97;border-radius:3px;"></div>
<div style="left:700px;top:897px;width:31px;height:17px;background:linear-gradient(#fbf8ea,#f1ebd3);border-left:1px solid #dcd5b6;border-radius:0 2px 2px 0;"></div>
<span class="t" style="left:704.24px;top:899.50px;font-size:11px;line-height:15px;color:#222;letter-spacing:-0.220px;font-weight:bold;">...</span>
<div style="left:716px;top:897px;width:1px;height:17px;background:#e4dec4;"></div>
<svg style="left:719px;top:900px" width="10" height="10" viewBox="0 0 10 10"><path d="M1.500 1.500l7 7M8.500 1.500l-7 7" stroke="#222" stroke-width="1.600"/></svg>
<div style="left:738.7px;top:896px;width:101px;height:19px;background:linear-gradient(#fdfaea,#f0e8c8);border:1px solid #c4ba8c;border-radius:3px;"></div>
<span class="t" style="left:759.00px;top:898.00px;font-size:11px;line-height:15px;color:#222;letter-spacing:0.260px;font-weight:bold;">Заполнить</span>
<svg style="left:942.500px;top:900.500px" width="10" height="10" viewBox="0 0 10 10"><path d="M1.500 1.500l7 7M8.500 1.500l-7 7" stroke="#4a8ccc" stroke-width="2.400" stroke-linecap="round"/></svg>
<span class="t" style="left:958.50px;top:898.00px;font-size:11px;line-height:15px;color:#111;letter-spacing:0.089px;">Закрыть</span>
<div style="left:1022px;top:103px;width:10px;height:827px;background:linear-gradient(90deg,#f3eedb,#faf7e8 50%,#f3eedb);"></div>
<div style="left:1025.5px;top:491.5px;width:3px;height:3px;background:#c4bd9c;border-radius:1.500px;box-shadow:1px 1px 0 #fffdf2;"></div>
<div style="left:1025.5px;top:501px;width:3px;height:3px;background:#c4bd9c;border-radius:1.500px;box-shadow:1px 1px 0 #fffdf2;"></div>
<div style="left:1025.5px;top:510.5px;width:3px;height:3px;background:#c4bd9c;border-radius:1.500px;box-shadow:1px 1px 0 #fffdf2;"></div>
<div style="left:1032px;top:75px;width:200px;height:856px;background:#faf7e8;border:1px solid #c4bc97;border-radius:6px 0 0 0;"></div>
<span class="t" style="left:1042.00px;top:81.50px;font-size:11px;line-height:15px;color:#111;letter-spacing:-0.300px;">Сообщения</span>
<svg style="left:1223px;top:85px" width="9" height="9" viewBox="0 0 9 9"><path d="M1 1l7 7M8 1l-7 7" stroke="#25588a" stroke-width="2"/></svg>
<div style="left:1042px;top:102.6px;width:190px;height:818.4px;background:#fff;border:1px solid #c4bc97;"></div>
<div style="left:1047px;top:105px;width:15px;height:15px;border-radius:8px;background:radial-gradient(circle at 50% 30%,#fff0cc,#f6c06a 65%,#dc9440);border:1px solid #c88a3a;"></div>
<div style="left:1053.5px;top:107.5px;width:2px;height:6px;background:#8a4a10;border-radius:1px;"></div>
<div style="left:1053.5px;top:115px;width:2px;height:2px;background:#8a4a10;border-radius:1px;"></div>
<span class="t" style="left:1066.50px;top:106.00px;font-size:11px;line-height:15px;color:#000;letter-spacing:-0.166px;">Не найдена номенклатура по</span>
<span class="t" style="left:1066.50px;top:119.00px;font-size:11px;line-height:15px;color:#000;letter-spacing:-0.246px;">штрихкоду: 8001063398501 и</span>
<span class="t" style="left:1066.80px;top:131.50px;font-size:11px;line-height:15px;color:#000;letter-spacing:-0.259px;">коду:</span>
<span class="t" style="left:1094.80px;top:130.30px;font-size:9px;line-height:13px;color:#000;">*</span>
<div style="left:1047px;top:149px;width:15px;height:15px;border-radius:8px;background:radial-gradient(circle at 50% 30%,#fff0cc,#f6c06a 65%,#dc9440);border:1px solid #c88a3a;"></div>
<div style="left:1053.5px;top:151.5px;width:2px;height:6px;background:#8a4a10;border-radius:1px;"></div>
<div style="left:1053.5px;top:159px;width:2px;height:2px;background:#8a4a10;border-radius:1px;"></div>
<span class="t" style="left:1066.50px;top:150.00px;font-size:11px;line-height:15px;color:#000;letter-spacing:-0.166px;">Не найдена номенклатура по</span>
<span class="t" style="left:1066.50px;top:163.00px;font-size:11px;line-height:15px;color:#000;letter-spacing:-0.246px;">штрихкоду: 8001063459844 и</span>
<span class="t" style="left:1066.80px;top:175.50px;font-size:11px;line-height:15px;color:#000;letter-spacing:-0.259px;">коду:</span>
<span class="t" style="left:1094.80px;top:174.30px;font-size:9px;line-height:13px;color:#000;">*</span>
<div style="left:1047px;top:193px;width:15px;height:15px;border-radius:8px;background:radial-gradient(circle at 50% 30%,#fff0cc,#f6c06a 65%,#dc9440);border:1px solid #c88a3a;"></div>
<div style="left:1053.5px;top:195.5px;width:2px;height:6px;background:#8a4a10;border-radius:1px;"></div>
<div style="left:1053.5px;top:203px;width:2px;height:2px;background:#8a4a10;border-radius:1px;"></div>
<span class="t" style="left:1066.50px;top:194.00px;font-size:11px;line-height:15px;color:#000;letter-spacing:-0.166px;">Не найдена номенклатура по</span>
<span class="t" style="left:1066.50px;top:207.00px;font-size:11px;line-height:15px;color:#000;letter-spacing:-0.246px;">штрихкоду: 8001063355658 и</span>
<span class="t" style="left:1066.80px;top:219.50px;font-size:11px;line-height:15px;color:#000;letter-spacing:-0.259px;">коду:</span>
<span class="t" style="left:1094.80px;top:218.30px;font-size:9px;line-height:13px;color:#000;">*</span>
<div style="left:1047px;top:237px;width:15px;height:15px;border-radius:8px;background:radial-gradient(circle at 50% 30%,#fff0cc,#f6c06a 65%,#dc9440);border:1px solid #c88a3a;"></div>
<div style="left:1053.5px;top:239.5px;width:2px;height:6px;background:#8a4a10;border-radius:1px;"></div>
<div style="left:1053.5px;top:247px;width:2px;height:2px;background:#8a4a10;border-radius:1px;"></div>
<span class="t" style="left:1066.50px;top:238.00px;font-size:11px;line-height:15px;color:#000;letter-spacing:-0.166px;">Не найдена номенклатура по</span>
<span class="t" style="left:1066.50px;top:251.00px;font-size:11px;line-height:15px;color:#000;letter-spacing:-0.246px;">штрихкоду: 8001063178677 и</span>
<span class="t" style="left:1066.80px;top:263.50px;font-size:11px;line-height:15px;color:#000;letter-spacing:-0.259px;">коду:</span>
<span class="t" style="left:1094.80px;top:262.30px;font-size:9px;line-height:13px;color:#000;">*</span>
<div style="left:1047px;top:281px;width:15px;height:15px;border-radius:8px;background:radial-gradient(circle at 50% 30%,#fff0cc,#f6c06a 65%,#dc9440);border:1px solid #c88a3a;"></div>
<div style="left:1053.5px;top:283.5px;width:2px;height:6px;background:#8a4a10;border-radius:1px;"></div>
<div style="left:1053.5px;top:291px;width:2px;height:2px;background:#8a4a10;border-radius:1px;"></div>
<span class="t" style="left:1066.50px;top:282.00px;font-size:11px;line-height:15px;color:#000;letter-spacing:-0.166px;">Не найдена номенклатура по</span>
<span class="t" style="left:1066.50px;top:295.00px;font-size:11px;line-height:15px;color:#000;letter-spacing:-0.246px;">штрихкоду: 8001063630465 и</span>
<span class="t" style="left:1066.80px;top:307.50px;font-size:11px;line-height:15px;color:#000;letter-spacing:-0.259px;">коду:</span>
<span class="t" style="left:1094.80px;top:306.30px;font-size:9px;line-height:13px;color:#000;">*</span>
<div style="left:1047px;top:325px;width:15px;height:15px;border-radius:8px;background:radial-gradient(circle at 50% 30%,#fff0cc,#f6c06a 65%,#dc9440);border:1px solid #c88a3a;"></div>
<div style="left:1053.5px;top:327.5px;width:2px;height:6px;background:#8a4a10;border-radius:1px;"></div>
<div style="left:1053.5px;top:335px;width:2px;height:2px;background:#8a4a10;border-radius:1px;"></div>
<span class="t" style="left:1066.50px;top:326.00px;font-size:11px;line-height:15px;color:#000;letter-spacing:-0.166px;">Не найдена номенклатура по</span>
<span class="t" style="left:1066.50px;top:339.00px;font-size:11px;line-height:15px;color:#000;letter-spacing:-0.246px;">штрихкоду: 8001063292465 и</span>
<span class="t" style="left:1066.80px;top:351.50px;font-size:11px;line-height:15px;color:#000;letter-spacing:-0.259px;">коду:</span>
<span class="t" style="left:1094.80px;top:350.30px;font-size:9px;line-height:13px;color:#000;">*</span>
<div style="left:1047px;top:369px;width:15px;height:15px;border-radius:8px;background:radial-gradient(circle at 50% 30%,#fff0cc,#f6c06a 65%,#dc9440);border:1px solid #c88a3a;"></div>
<div style="left:1053.5px;top:371.5px;width:2px;height:6px;background:#8a4a10;border-radius:1px;"></div>
<div style="left:1053.5px;top:379px;width:2px;height:2px;background:#8a4a10;border-radius:1px;"></div>
<span class="t" style="left:1066.50px;top:370.00px;font-size:11px;line-height:15px;color:#000;letter-spacing:-0.166px;">Не найдена номенклатура по</span>
<span class="t" style="left:1066.50px;top:383.00px;font-size:11px;line-height:15px;color:#000;letter-spacing:-0.246px;">штрихкоду: 8001063070377 и</span>
<span class="t" style="left:1066.80px;top:395.50px;font-size:11px;line-height:15px;color:#000;letter-spacing:-0.259px;">коду:</span>
<span class="t" style="left:1094.80px;top:394.30px;font-size:9px;line-height:13px;color:#000;">*</span>
<div style="left:1047px;top:413px;width:15px;height:15px;border-radius:8px;background:radial-gradient(circle at 50% 30%,#fff0cc,#f6c06a 65%,#dc9440);border:1px solid #c88a3a;"></div>
<div style="left:1053.5px;top:415.5px;width:2px;height:6px;background:#8a4a10;border-radius:1px;"></div>
<div style="left:1053.5px;top:423px;width:2px;height:2px;background:#8a4a10;border-radius:1px;"></div>
<span class="t" style="left:1066.50px;top:414.00px;font-size:11px;line-height:15px;color:#000;letter-spacing:-0.166px;">Не найдена номенклатура по</span>
<span class="t" style="left:1066.50px;top:427.00px;font-size:11px;line-height:15px;color:#000;letter-spacing:-0.246px;">штрихкоду: 8001063271019 и</span>
<span class="t" style="left:1066.80px;top:439.50px;font-size:11px;line-height:15px;color:#000;letter-spacing:-0.259px;">коду:</span>
<span class="t" style="left:1094.80px;top:438.30px;font-size:9px;line-height:13px;color:#000;">*</span>
<div style="left:1043px;top:455px;width:190px;height:44px;background:#658dd2;"></div>
<div style="left:1047px;top:457px;width:15px;height:15px;border-radius:8px;background:radial-gradient(circle at 50% 30%,#fff0cc,#f6c06a 65%,#dc9440);border:1px solid #c88a3a;"></div>
<div style="left:1053.5px;top:459.5px;width:2px;height:6px;background:#8a4a10;border-radius:1px;"></div>
<div style="left:1053.5px;top:467px;width:2px;height:2px;background:#8a4a10;border-radius:1px;"></div>
<span class="t" style="left:1066.50px;top:458.00px;font-size:11px;line-height:15px;color:#dfe8f8;letter-spacing:-0.166px;">Не найдена номенклатура по</span>
<span class="t" style="left:1066.50px;top:471.00px;font-size:11px;line-height:15px;color:#dfe8f8;letter-spacing:-0.246px;">штрихкоду: 8001063398501 и</span>
<span class="t" style="left:1066.80px;top:483.50px;font-size:11px;line-height:15px;color:#dfe8f8;letter-spacing:-0.259px;">коду:</span>
<span class="t" style="left:1094.80px;top:482.30px;font-size:9px;line-height:13px;color:#dfe8f8;">*</span>
<div style="left:1047px;top:501px;width:15px;height:15px;border-radius:8px;background:radial-gradient(circle at 50% 30%,#fff0cc,#f6c06a 65%,#dc9440);border:1px solid #c88a3a;"></div>
<div style="left:1053.5px;top:503.5px;width:2px;height:6px;background:#8a4a10;border-radius:1px;"></div>
<div style="left:1053.5px;top:511px;width:2px;height:2px;background:#8a4a10;border-radius:1px;"></div>
<span class="t" style="left:1066.50px;top:502.00px;font-size:11px;line-height:15px;color:#000;letter-spacing:-0.166px;">Не найдена номенклатура по</span>
<span class="t" style="left:1066.50px;top:515.00px;font-size:11px;line-height:15px;color:#000;letter-spacing:-0.246px;">штрихкоду: 8001063459844 и</span>
<span class="t" style="left:1066.80px;top:527.50px;font-size:11px;line-height:15px;color:#000;letter-spacing:-0.259px;">коду:</span>
<span class="t" style="left:1094.80px;top:526.30px;font-size:9px;line-height:13px;color:#000;">*</span>
<div style="left:1047px;top:545px;width:15px;height:15px;border-radius:8px;background:radial-gradient(circle at 50% 30%,#fff0cc,#f6c06a 65%,#dc9440);border:1px solid #c88a3a;"></div>
<div style="left:1053.5px;top:547.5px;width:2px;height:6px;background:#8a4a10;border-radius:1px;"></div>
<div style="left:1053.5px;top:555px;width:2px;height:2px;background:#8a4a10;border-radius:1px;"></div>
<span class="t" style="left:1066.50px;top:546.00px;font-size:11px;line-height:15px;color:#000;letter-spacing:-0.166px;">Не найдена номенклатура по</span>
<span class="t" style="left:1066.50px;top:559.00px;font-size:11px;line-height:15px;color:#000;letter-spacing:-0.246px;">штрихкоду: 8001063355658 и</span>
<span class="t" style="left:1066.80px;top:571.50px;font-size:11px;line-height:15px;color:#000;letter-spacing:-0.259px;">коду:</span>
<span class="t" style="left:1094.80px;top:570.30px;font-size:9px;line-height:13px;color:#000;">*</span>
<div style="left:1047px;top:589px;width:15px;height:15px;border-radius:8px;background:radial-gradient(circle at 50% 30%,#fff0cc,#f6c06a 65%,#dc9440);border:1px solid #c88a3a;"></div>
<div style="left:1053.5px;top:591.5px;width:2px;height:6px;background:#8a4a10;border-radius:1px;"></div>
<div style="left:1053.5px;top:599px;width:2px;height:2px;background:#8a4a10;border-radius:1px;"></div>
<span class="t" style="left:1066.50px;top:590.00px;font-size:11px;line-height:15px;color:#000;letter-spacing:-0.166px;">Не найдена номенклатура по</span>
<span class="t" style="left:1066.50px;top:603.00px;font-size:11px;line-height:15px;color:#000;letter-spacing:-0.246px;">штрихкоду: 8001063178677 и</span>
<span class="t" style="left:1066.80px;top:615.50px;font-size:11px;line-height:15px;color:#000;letter-spacing:-0.259px;">коду:</span>
<span class="t" style="left:1094.80px;top:614.30px;font-size:9px;line-height:13px;color:#000;">*</span>
<div style="left:1047px;top:633px;width:15px;height:15px;border-radius:8px;background:radial-gradient(circle at 50% 30%,#fff0cc,#f6c06a 65%,#dc9440);border:1px solid #c88a3a;"></div>
<div style="left:1053.5px;top:635.5px;width:2px;height:6px;background:#8a4a10;border-radius:1px;"></div>
<div style="left:1053.5px;top:643px;width:2px;height:2px;background:#8a4a10;border-radius:1px;"></div>
<span class="t" style="left:1066.50px;top:634.00px;font-size:11px;line-height:15px;color:#000;letter-spacing:-0.166px;">Не найдена номенклатура по</span>
<span class="t" style="left:1066.50px;top:647.00px;font-size:11px;line-height:15px;color:#000;letter-spacing:-0.246px;">штрихкоду: 8001063630465 и</span>
<span class="t" style="left:1066.80px;top:659.50px;font-size:11px;line-height:15px;color:#000;letter-spacing:-0.259px;">коду:</span>
<span class="t" style="left:1094.80px;top:658.30px;font-size:9px;line-height:13px;color:#000;">*</span>
<div style="left:1047px;top:677px;width:15px;height:15px;border-radius:8px;background:radial-gradient(circle at 50% 30%,#fff0cc,#f6c06a 65%,#dc9440);border:1px solid #c88a3a;"></div>
<div style="left:1053.5px;top:679.5px;width:2px;height:6px;background:#8a4a10;border-radius:1px;"></div>
<div style="left:1053.5px;top:687px;width:2px;height:2px;background:#8a4a10;border-radius:1px;"></div>
<span class="t" style="left:1066.50px;top:678.00px;font-size:11px;line-height:15px;color:#000;letter-spacing:-0.166px;">Не найдена номенклатура по</span>
<span class="t" style="left:1066.50px;top:691.00px;font-size:11px;line-height:15px;color:#000;letter-spacing:-0.246px;">штрихкоду: 8001063292465 и</span>
<span class="t" style="left:1066.80px;top:703.50px;font-size:11px;line-height:15px;color:#000;letter-spacing:-0.259px;">коду:</span>
<span class="t" style="left:1094.80px;top:702.30px;font-size:9px;line-height:13px;color:#000;">*</span>
<div style="left:1047px;top:721px;width:15px;height:15px;border-radius:8px;background:radial-gradient(circle at 50% 30%,#fff0cc,#f6c06a 65%,#dc9440);border:1px solid #c88a3a;"></div>
<div style="left:1053.5px;top:723.5px;width:2px;height:6px;background:#8a4a10;border-radius:1px;"></div>
<div style="left:1053.5px;top:731px;width:2px;height:2px;background:#8a4a10;border-radius:1px;"></div>
<span class="t" style="left:1066.50px;top:722.00px;font-size:11px;line-height:15px;color:#000;letter-spacing:-0.166px;">Не найдена номенклатура по</span>
<span class="t" style="left:1066.50px;top:735.00px;font-size:11px;line-height:15px;color:#000;letter-spacing:-0.246px;">штрихкоду: 8001063070377 и</span>
<span class="t" style="left:1066.80px;top:747.50px;font-size:11px;line-height:15px;color:#000;letter-spacing:-0.259px;">коду:</span>
<span class="t" style="left:1094.80px;top:746.30px;font-size:9px;line-height:13px;color:#000;">*</span>
<div style="left:1047px;top:765px;width:15px;height:15px;border-radius:8px;background:radial-gradient(circle at 50% 30%,#fff0cc,#f6c06a 65%,#dc9440);border:1px solid #c88a3a;"></div>
<div style="left:1053.5px;top:767.5px;width:2px;height:6px;background:#8a4a10;border-radius:1px;"></div>
<div style="left:1053.5px;top:775px;width:2px;height:2px;background:#8a4a10;border-radius:1px;"></div>
<span class="t" style="left:1066.50px;top:766.00px;font-size:11px;line-height:15px;color:#000;letter-spacing:-0.166px;">Не найдена номенклатура по</span>
<span class="t" style="left:1066.50px;top:779.00px;font-size:11px;line-height:15px;color:#000;letter-spacing:-0.246px;">штрихкоду: 8001063271019 и</span>
<span class="t" style="left:1066.80px;top:791.50px;font-size:11px;line-height:15px;color:#000;letter-spacing:-0.259px;">коду:</span>
<span class="t" style="left:1094.80px;top:790.30px;font-size:9px;line-height:13px;color:#000;">*</span>
<div style="left:1227px;top:880px;width:2px;height:36px;background:#111;"></div>
<div style="left:0px;top:930px;width:1229px;height:32px;background:linear-gradient(rgba(0,0,0,.07),rgba(0,0,0,0) 45%,rgba(255,255,255,.06)),linear-gradient(90deg,#b2b2b3 0%,#c0c0c1 30%,#b4b4b6 55%,#9c9ca1 80%,#909096 100%);"></div>
<div style="left:0px;top:930px;width:1229px;height:1px;background:#8e8e90;"></div>
<div style="left:6px;top:936px;width:92px;height:21px;background:linear-gradient(#fbfbfc,#e6e6ea);border:1px solid #8e8e96;border-radius:4px;"></div>
<span class="t" style="left:26.50px;top:939.00px;font-size:11px;line-height:15px;color:#111;letter-spacing:-0.183px;">История...</span>
<div style="left:1078px;top:940px;width:11px;height:12px;background:#f4f8f0;border:1px solid #9aa88a;"></div>
<span class="t" style="left:1082.21px;top:939.50px;font-size:10px;line-height:14px;color:#2a7a1a;letter-spacing:-0.200px;font-weight:bold;">i</span>
<span class="t" style="left:1096.00px;top:938.50px;font-size:11px;line-height:15px;color:#4a5a8c;letter-spacing:-0.203px;">Обновить курсы валют</span>
<div style="left:0px;top:962px;width:1229px;height:11px;background:#0b0f16;"></div>
<div style="left:0px;top:961px;width:1229px;height:1px;background:#5a5e66;"></div>
<div style="left:8px;top:965px;width:35px;height:30px;border-radius:18px;background:radial-gradient(circle at 50% 40%,#7ab0e8,#2a5aa8 60%,#16305a);border:1px solid #9ab8d8;"></div>
<div style="left:19px;top:969px;width:12px;height:10px;border-radius:6px;background:#e0442a;"></div>
<div style="left:59px;top:963px;width:86px;height:12px;background:linear-gradient(100deg,#b8b8b8,#7a7a7a 40%,#2a2a2a 75%,#3a3a3a);border:1px solid #8a8a8a;border-radius:3px 3px 0 0;"></div>
<div style="left:202px;top:963px;width:86px;height:12px;background:linear-gradient(100deg,#b8b8b8,#7a7a7a 40%,#2a2a2a 75%,#3a3a3a);border:1px solid #8a8a8a;border-radius:3px 3px 0 0;"></div>
<div style="left:292px;top:963px;width:86px;height:12px;background:linear-gradient(100deg,#b8b8b8,#7a7a7a 40%,#2a2a2a 75%,#3a3a3a);border:1px solid #8a8a8a;border-radius:3px 3px 0 0;"></div>
<div style="left:436px;top:963px;width:85px;height:12px;background:linear-gradient(100deg,#b8b8b8,#7a7a7a 40%,#2a2a2a 75%,#3a3a3a);border:1px solid #8a8a8a;border-radius:3px 3px 0 0;"></div>
<div style="left:524px;top:963px;width:86px;height:12px;background:linear-gradient(100deg,#b8b8b8,#7a7a7a 40%,#2a2a2a 75%,#3a3a3a);border:1px solid #8a8a8a;border-radius:3px 3px 0 0;"></div>
<div style="left:610px;top:963px;width:87px;height:12px;background:linear-gradient(100deg,#b8b8b8,#7a7a7a 40%,#2a2a2a 75%,#3a3a3a);border:1px solid #8a8a8a;border-radius:3px 3px 0 0;"></div>
<div style="left:700px;top:963px;width:87px;height:12px;background:linear-gradient(100deg,#b8b8b8,#7a7a7a 40%,#2a2a2a 75%,#3a3a3a);border:1px solid #8a8a8a;border-radius:3px 3px 0 0;"></div>
<div style="left:790px;top:963px;width:84px;height:12px;background:linear-gradient(100deg,#b8b8b8,#7a7a7a 40%,#2a2a2a 75%,#3a3a3a);border:1px solid #8a8a8a;border-radius:3px 3px 0 0;"></div>
<div style="left:879px;top:963px;width:85px;height:12px;background:linear-gradient(100deg,#b8b8b8,#7a7a7a 40%,#2a2a2a 75%,#3a3a3a);border:1px solid #8a8a8a;border-radius:3px 3px 0 0;"></div>
<div style="left:968px;top:963px;width:84px;height:12px;background:linear-gradient(100deg,#f0f0ee,#d8d8d4 50%,#a8a8a4);border:1px solid #8a8a8a;border-radius:3px 3px 0 0;"></div>
<svg style="left:66px;top:963px" width="24" height="10"><path d="M2 10l5-6 3 3 3-6 4 9z" fill="#c8281e" stroke="#eee" stroke-width=".8"/></svg>
<div style="left:163px;top:965px;width:20px;height:16px;border-radius:10px;border:2px solid #c8c8c8;background:#1a1a1a;"></div>
<div style="left:208px;top:964px;width:26px;height:12px;border-radius:4px;background:#f0c060;border:2px solid #f8e0a0;"></div>
<div style="left:300px;top:964px;width:12px;height:10px;background:#e8c860;"></div>
<div style="left:393px;top:965px;width:16px;height:10px;background:#2a5ac8;border-top:2px solid #dfe8f8;"></div>
<div style="left:410px;top:965px;width:8px;height:10px;background:#f4f4f4;"></div>
<div style="left:444px;top:966px;width:24px;height:20px;border-radius:12px;background:#2aa8e8;"></div>
<div style="left:531px;top:965px;width:20px;height:10px;background:#dfeedd;border:2px solid #4a9a4a;"></div>
<div style="left:618px;top:965px;width:20px;height:10px;background:#dfeedd;border:2px solid #4a9a4a;"></div>
<div style="left:712px;top:965px;width:28px;height:20px;border-radius:14px;background:#3a9ae0;border-top:2px solid #f0c030;"></div>
<div style="left:800px;top:965px;width:22px;height:14px;border-radius:8px;background:#e8281e;border:2px solid #fff;"></div>
<div style="left:889px;top:966px;width:22px;height:14px;border-radius:8px;background:#2a8ae8;border:2px solid #dfeefa;"></div>
<div style="left:978px;top:967px;width:24px;height:20px;border-radius:12px;background:#fbf0b0;border:2px solid #e8d070;"></div>
<span class="t" style="left:1187.50px;top:966.20px;font-size:12px;line-height:16px;color:#fff;letter-spacing:-0.206px;">15:20</span>
<div style="left:0px;top:34px;width:8px;height:896px;background:linear-gradient(90deg,#1a1a1a 0,#1a1a1a 1.300px,#b2b2b5 1.300px,#c0c0c3 4px,#b2b2b5 7px,#cfcdc2 8px);"></div>
<div style="left:0px;top:930px;width:1.3px;height:32px;background:#1a1a1a;"></div>
<div style="left:0px;top:0px;width:1.3px;height:34px;background:#1a1a1a;"></div>
<svg style="left:912px;top:30px" width="100" height="24" viewBox="0 0 100 24"><path d="M4 0 C18 2 16 20.500 30 20.500 L72 20.500 C86 20.500 84 2 98 0 Z" fill="#e6e6e6" fill-opacity=".93" stroke="#9a9a9a" stroke-width="1"/></svg>
<div style="left:258px;top:-4px;width:753px;height:37.5px;background:#f3f3f3;border:1px solid #7c7c7c;border-radius:0 0 7px 7px;box-shadow:0 1px 1px rgba(0,0,0,.3);"></div>
<div style="left:262px;top:-4px;width:745px;height:34px;background:linear-gradient(#fafafa 4px,#efefef 18px,#dcdcdc 33px);border:1px solid #9c9c9c;border-radius:0 0 4px 4px;"></div>
<svg style="left:946px;top:37px" width="12" height="11" viewBox="0 0 12 11"><path d="M1 4V1h3M8 1h3v3M11 7v3H8M4 10H1V7M1.500 1.500l3 2.500M10.500 1.500l-3 2.500M10.500 9.500l-3-2.500M1.500 9.500l3-2.500" fill="none" stroke="#8a8a8a" stroke-width="1.200"/></svg>
<div style="left:963px;top:35px;width:1px;height:12px;background:#bdbdbd;"></div>
<svg style="left:968px;top:37px" width="13" height="11" viewBox="0 0 13 11"><path d="M1.500 9l5-5.500 5 5.500" fill="none" stroke="#6e6e6e" stroke-width="2.800"/></svg>
<svg style="left:276px;top:7px" width="16" height="16" viewBox="0 0 16 16"><path d="M2.500 3l11 11M13.500 3l-11 11" stroke="#6e6e6e" stroke-width="3.600" stroke-linecap="round"/></svg>
<div style="left:305px;top:6px;width:1px;height:17px;background:#cdcdcd;"></div>
<div style="left:306px;top:6px;width:1px;height:17px;background:#fbfbfb;"></div>
<svg style="left:321px;top:6px" width="12" height="18" viewBox="0 0 12 18"><path d="M7.500 .5L1.500 9.500h4L3.500 17 11 7.500H6.800L10 .5z" fill="#6e6e6e"/></svg>
<span class="t" style="left:341.00px;top:7.40px;font-size:13.5px;line-height:18px;color:#444;transform:scaleX(0.8647);transform-origin:left center;font-weight:bold;">Действия</span>
<svg style="left:402px;top:12px" width="9" height="6"><path d="M0 0h9l-4.500 6z" fill="#8c8c8c"/></svg>
<div style="left:423px;top:6px;width:1px;height:17px;background:#cdcdcd;"></div>
<div style="left:424px;top:6px;width:1px;height:17px;background:#fbfbfb;"></div>
<svg style="left:437px;top:9px" width="17" height="12" viewBox="0 0 17 12"><path d="M.5 6C3 1.500 6 .5 8.500 .5S14 1.500 16.500 6C14 10.500 11 11.500 8.500 11.500S3 10.500 .5 6z" fill="#6a6a6a"/><circle cx="8.500" cy="6" r="3.600" fill="#f0f0f0"/><circle cx="8.500" cy="6" r="2" fill="#5a5a5a"/></svg>
<span class="t" style="left:459.50px;top:7.40px;font-size:13.5px;line-height:18px;color:#444;transform:scaleX(0.8471);transform-origin:left center;font-weight:bold;">Просмотр</span>
<svg style="left:520.5px;top:12px" width="9" height="6"><path d="M0 0h9l-4.500 6z" fill="#8c8c8c"/></svg>
<div style="left:542px;top:6px;width:1px;height:17px;background:#cdcdcd;"></div>
<div style="left:543px;top:6px;width:1px;height:17px;background:#fbfbfb;"></div>
<svg style="left:556px;top:6px" width="18" height="18" viewBox="0 0 18 18"><rect x="1" y="1.500" width="11.500" height="8" rx="2.500" fill="#7c7c7c"/><path d="M3.500 9l-.5 3 3.500-3z" fill="#7c7c7c"/><rect x="5.500" y="6" width="11.500" height="8" rx="2.500" fill="#6a6a6a" stroke="#ececec" stroke-width="1.200"/><path d="M13 13.500l2.500 3.500-.2-3.500z" fill="#6a6a6a"/></svg>
<span class="t" style="left:578.50px;top:7.40px;font-size:13.5px;line-height:18px;color:#444;transform:scaleX(0.8563);transform-origin:left center;font-weight:bold;">Аудио/Видео</span>
<svg style="left:658.5px;top:12px" width="9" height="6"><path d="M0 0h9l-4.500 6z" fill="#8c8c8c"/></svg>
<div style="left:680px;top:6px;width:1px;height:17px;background:#cdcdcd;"></div>
<div style="left:681px;top:6px;width:1px;height:17px;background:#fbfbfb;"></div>
<svg style="left:695px;top:7px" width="16" height="17" viewBox="0 0 16 17"><path d="M1 4h3.500v11H11v1.500H1z" fill="none" stroke="#666" stroke-width="1.600"/><path d="M5 1h6l4 4v9H5z" fill="#f4f4f4" stroke="#666" stroke-width="1.600"/><path d="M10.500 1v4.500H15" fill="none" stroke="#666" stroke-width="1.300"/></svg>
<span class="t" style="left:717.00px;top:7.40px;font-size:13.5px;line-height:18px;color:#444;transform:scaleX(0.8889);transform-origin:left center;font-weight:bold;">Передача файлов</span>
<svg style="left:829.5px;top:12px" width="9" height="6"><path d="M0 0h9l-4.500 6z" fill="#8c8c8c"/></svg>
<div style="left:851px;top:6px;width:1px;height:17px;background:#cdcdcd;"></div>
<div style="left:852px;top:6px;width:1px;height:17px;background:#fbfbfb;"></div>
<svg style="left:866px;top:7px" width="17" height="17" viewBox="0 0 17 17"><path d="M7 1.500l3 2-1 1.500c1.500 0 2.500 1 2 2.500l3-1 2 3.500-2.500 1.500.5 1c.5 1.500-1.500 2.500-2.500 1.500l-1.500 2-3-2 1-1.500c-1.500 0-2.500-1-2-2.500l-3 1-2-3.500L3.500 6 3 5c-.5-1.500 1.500-2.500 2.500-1.500z" fill="#747474"/></svg>
<span class="t" style="left:887.00px;top:7.40px;font-size:13.5px;line-height:18px;color:#444;transform:scaleX(0.8730);transform-origin:left center;font-weight:bold;">Дополнительно</span>
<svg style="left:985px;top:12px" width="9" height="6"><path d="M0 0h9l-4.500 6z" fill="#8c8c8c"/></svg>
<svg style="left:0;top:0" width="1229" height="973" viewBox="0 0 1229 973"><defs><filter id="sh" x="-5%" y="-5%" width="110%" height="110%"><feDropShadow dx="1" dy="1.400" stdDeviation=".55" flood-color="#3a4644" flood-opacity=".45"/></filter></defs><g filter="url(#sh)"><rect x="444.750" y="663.400" width="180.400" height="40.300" rx="12" ry="12" fill="none" stroke="#e53a31" stroke-width="12"/><path d="M773.58 120.71L559.10 220.00L555.34 205.27A2.9 2.9 0 0 0 549.85 204.86L533.54 243.67A3.7 3.7 0 0 0 536.11 248.70L577.39 258.45A2.9 2.9 0 0 0 580.49 254.05L571.80 240.60L777.02 127.49A3.8 3.8 0 0 0 773.58 120.71Z" fill="#e53a31"/><path d="M866.02 379.83L590.20 634.70L579.23 616.98A4 4 0 0 0 571.84 618.77L567.55 672.87A4 4 0 0 0 571.69 677.18L626.34 675.14A4 4 0 0 0 628.51 667.88L611.10 655.50L872.58 386.57A4.7 4.7 0 0 0 866.02 379.83Z" fill="#e53a31"/><path d="M629.38 475.91L236.70 685.60L231.28 666.51A3.3 3.3 0 0 0 225.01 666.28L206.30 717.56A4.3 4.3 0 0 0 209.70 723.29L262.50 731.28A3.3 3.3 0 0 0 265.51 725.89L252.90 711.00L633.22 482.69A3.9 3.9 0 0 0 629.38 475.91Z" fill="#e53a31"/></g></svg>
</div></body></html>
